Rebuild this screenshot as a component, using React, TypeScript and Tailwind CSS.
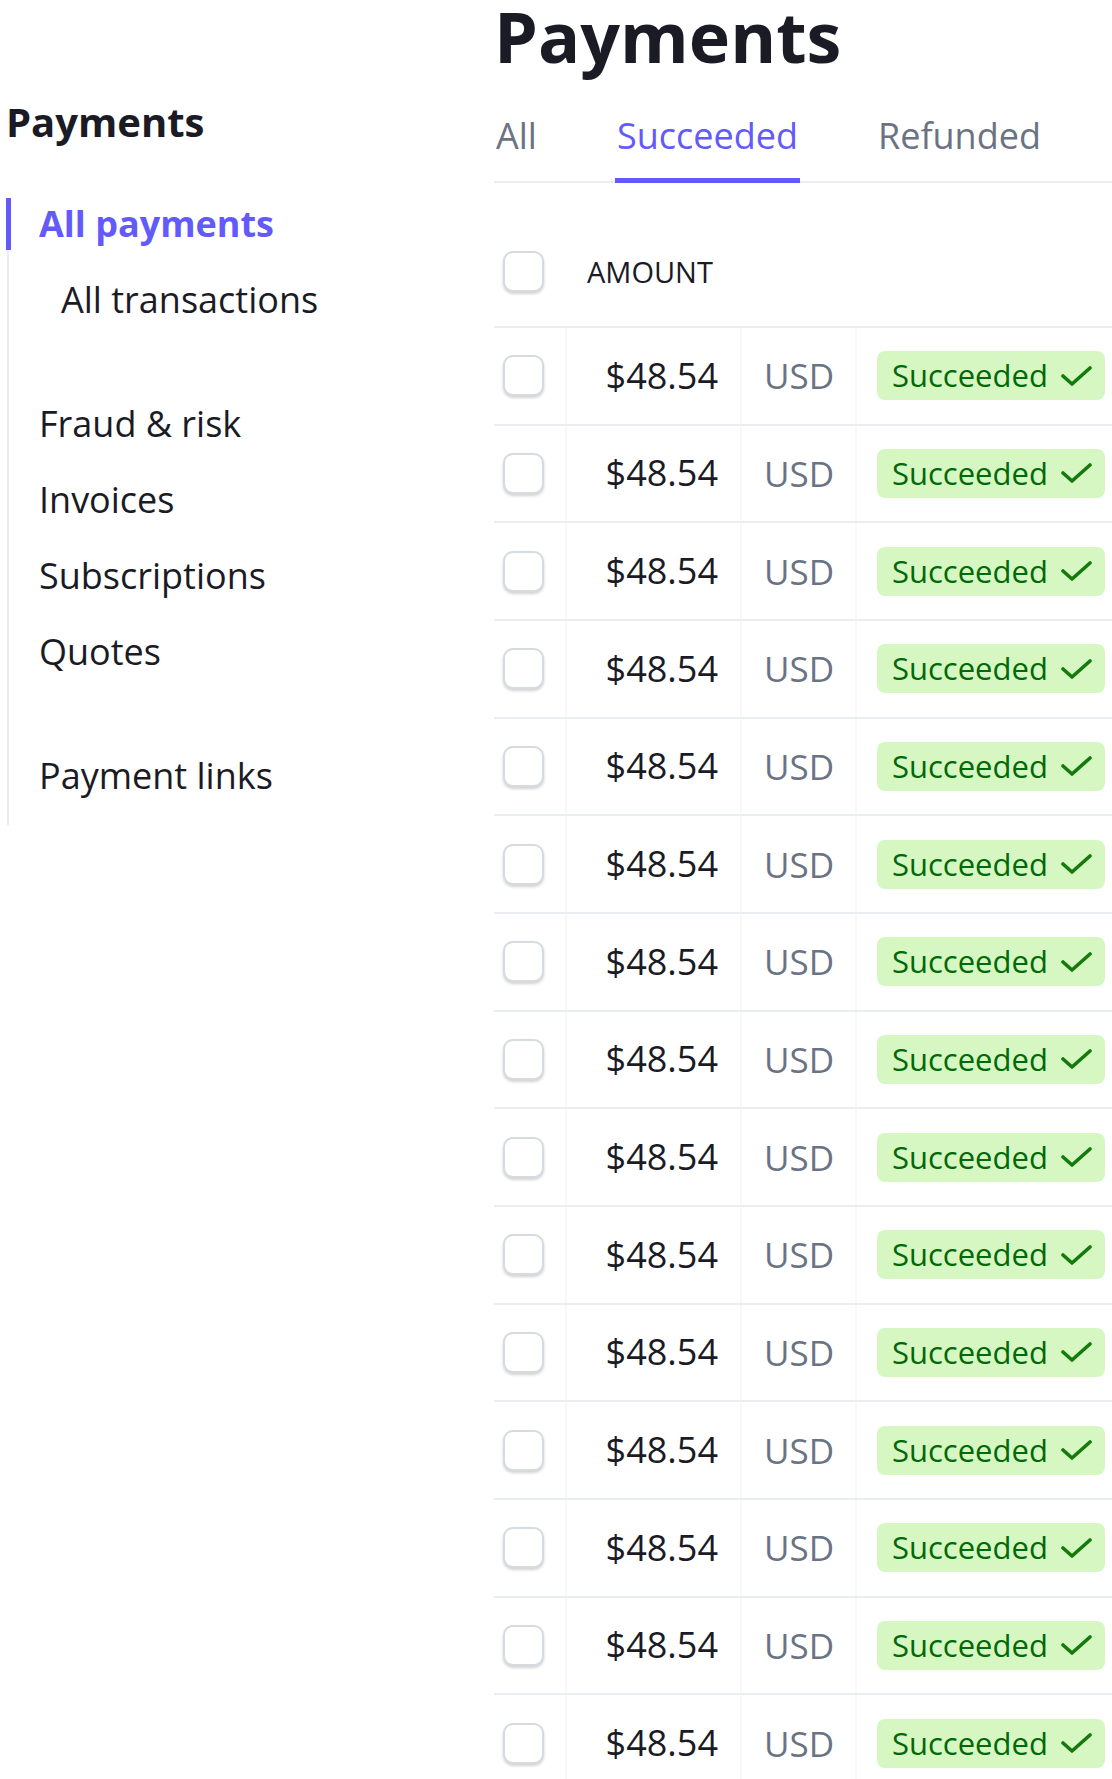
import React from "react";

const navItems: { label: string; active?: boolean; sub?: boolean; gap?: boolean }[] = [
  { label: "All payments", active: true },
  { label: "All transactions", sub: true },
  { label: "Fraud & risk", gap: true },
  { label: "Invoices" },
  { label: "Subscriptions" },
  { label: "Quotes" },
  { label: "Payment links", gap: true },
];

const tabs = ["All", "Succeeded", "Refunded"];

function Checkbox() {
  return (
    <span className="block w-[41px] h-[41px] rounded-[10px] border-2 border-[#d5dbe1] bg-white shadow-[0_2px_3px_rgba(0,0,0,0.18)]" />
  );
}

function StatusBadge() {
  return (
    <span className="inline-flex items-center h-[49px] rounded-[8px] bg-[#d7f7c2] pl-[15px] pr-[13px] gap-[12px] text-[31px] leading-none text-[#006908] whitespace-nowrap">
      Succeeded
      <svg width="32" height="20" viewBox="0 0 32 20" fill="none">
        <polyline
          points="3,10 12,18 30,2"
          stroke="#157a0c"
          strokeWidth="3.6"
          strokeLinecap="round"
          strokeLinejoin="round"
        />
      </svg>
    </span>
  );
}

export default function App() {
  const rows = Array.from({ length: 15 }, (_, i) => i);

  return (
    <div className="flex w-[1112px] h-[1779px] overflow-hidden bg-white font-['Open_Sans','Noto_Sans',sans-serif] text-[#1a1b25]">
      {/* sidebar */}
      <aside className="w-[494px] shrink-0 pl-[6px]">
        <h2 className="mt-[98px] text-[40px] leading-[48px] font-bold">Payments</h2>
        <nav className="mt-[52px] ml-[1px] border-l-2 border-[#ebeef1] pb-[23px]">
          {navItems.map((item, i) => (
            <div
              key={item.label}
              className={`relative text-[36px] leading-[52px] whitespace-nowrap ${
                i === 0 ? "" : item.gap ? "mt-[72px]" : "mt-[24px]"
              } ${item.sub ? "pl-[52px]" : "pl-[30px]"} ${
                item.active ? "font-bold text-[#625afa]" : "text-[#1a1b25]"
              }`}
            >
              {item.active && (
                <span className="absolute left-[-3px] top-0 bottom-0 w-[5px] bg-[#625afa]" />
              )}
              {item.label}
            </div>
          ))}
        </nav>
      </aside>

      {/* main */}
      <main className="flex-1 min-w-0 overflow-hidden">
        <h1 className="text-[70px] leading-[72px] font-bold">Payments</h1>

        <div className="mt-[44px] flex gap-[76px] border-b-2 border-[#ebeef1] w-[900px]">
          {tabs.map((tab) => {
            const active = tab === "Succeeded";
            return (
              <button
                key={tab}
                className={`-mb-[2px] px-[2px] pb-[22px] text-[36px] leading-[40px] border-b-[5px] ${
                  active
                    ? "border-[#625afa] text-[#625afa]"
                    : "border-transparent text-[#6a7383]"
                }`}
              >
                {tab}
              </button>
            );
          })}
        </div>

        <div className="w-[800px]">
          <div className="flex items-center pt-[68px] pb-[34px]">
            <div className="w-[71px] pl-[9px]">
              <Checkbox />
            </div>
            <div className="pl-[22px] text-[29px] leading-none">AMOUNT</div>
          </div>

          {rows.map((r) => (
            <div key={r} className="flex h-[97.67px] border-t-2 border-[#ebeef1]">
              <div className="w-[71px] pl-[9px] flex items-center">
                <Checkbox />
              </div>
              <div className="w-[175px] border-l-2 border-[#f7f8f9] flex items-center justify-end pr-[22px] text-[36px] leading-none">
                $48.54
              </div>
              <div className="w-[115px] border-l-2 border-[#f7f8f9] flex items-center pl-[22px] text-[35px] leading-none text-[#6a7383]">
                USD
              </div>
              <div className="flex-1 border-l-2 border-[#f7f8f9] flex items-center pl-[20px]">
                <StatusBadge />
              </div>
            </div>
          ))}
        </div>
      </main>
    </div>
  );
}
